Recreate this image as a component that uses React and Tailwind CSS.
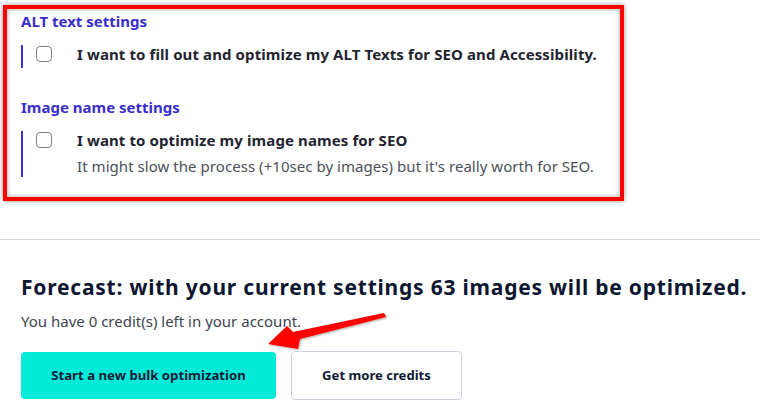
import React from "react";

function Checkbox() {
  return (
    <span className="block w-[16px] h-[16px] shrink-0 rounded-[4px] border border-[#7b8088] bg-white" />
  );
}

export default function App() {
  return (
    <div
      className="relative w-[760px] h-[414px] bg-white overflow-hidden"
      style={{ fontFamily: '"Noto Sans", "Open Sans", sans-serif' }}
    >
      <div className="ml-[3px] mt-[5px] w-[621px] h-[196px] border-[4px] border-[#ff0000] shadow-[0_0_5px_rgba(0,0,0,0.45),inset_0_0_5px_rgba(0,0,0,0.35)] pl-[14px] pt-[2px]">
        <h3 className="text-[15px] leading-[20px] font-bold text-[#3b2fc9]">ALT text settings</h3>
        <div className="mt-[14px] flex h-[23px] border-l-[2px] border-[#3b34d0] pl-[13px] items-start">
          <div className="pt-[1px]"><Checkbox /></div>
          <p className="ml-[25px] text-[15px] leading-[18px] font-bold tracking-[0.1px] text-[#1f2430]">
            I want to fill out and optimize my ALT Texts for SEO and Accessibility.
          </p>
        </div>
        <h3 className="mt-[29px] text-[15px] leading-[20px] font-bold text-[#3b2fc9]">Image name settings</h3>
        <div className="mt-[14px] flex h-[46px] border-l-[2px] border-[#3b34d0] pl-[13px] items-start">
          <div className="pt-[1px]"><Checkbox /></div>
          <div className="ml-[25px]">
            <p className="text-[15px] leading-[18px] font-bold tracking-[0.1px] text-[#1f2430]">
              I want to optimize my image names for SEO
            </p>
            <p className="mt-[6px] text-[15px] leading-[22px] tracking-[0.05px] text-[#4a4f5a]">
              It might slow the process (+10sec by images) but it's really worth for SEO.
            </p>
          </div>
        </div>
      </div>

      <div className="mt-[38px] h-px bg-[#d3d6de]" />

      <div className="pl-[21px] pt-[33px]">
        <h2 className="text-[21px] leading-[28px] font-bold tracking-[0.78px] text-[#0d1630]">
          Forecast: with your current settings 63 images will be optimized.
        </h2>
        <p className="mt-[9px] text-[15px] leading-[22px] text-[#3d4350]">
          You have 0 credit(s) left in your account.
        </p>
        <div className="mt-[20px] flex gap-[15px]">
          <button className="w-[255px] h-[47px] rounded-[4px] bg-[#03ead9] text-[13.2px] font-bold text-[#101a35]">
            Start a new bulk optimization
          </button>
          <button className="w-[171px] h-[49px] -mt-[1px] rounded-[4px] border border-[#cdd2dc] bg-white text-[13.1px] font-bold text-[#101a35]">
            Get more credits
          </button>
        </div>
      </div>

      <svg
        className="absolute left-0 top-0 pointer-events-none"
        width="760"
        height="414"
        viewBox="0 0 760 414"
      >
        <defs>
          <filter id="ash" x="-20%" y="-50%" width="140%" height="200%">
            <feDropShadow dx="1" dy="1" stdDeviation="1.2" floodColor="#000" floodOpacity="0.35" />
          </filter>
        </defs>
        <polygon
          points="384,313 386,317 300,339 298,349 268,344 287,326 293,332"
          fill="#ff0000"
          filter="url(#ash)"
        />
      </svg>
    </div>
  );
}
